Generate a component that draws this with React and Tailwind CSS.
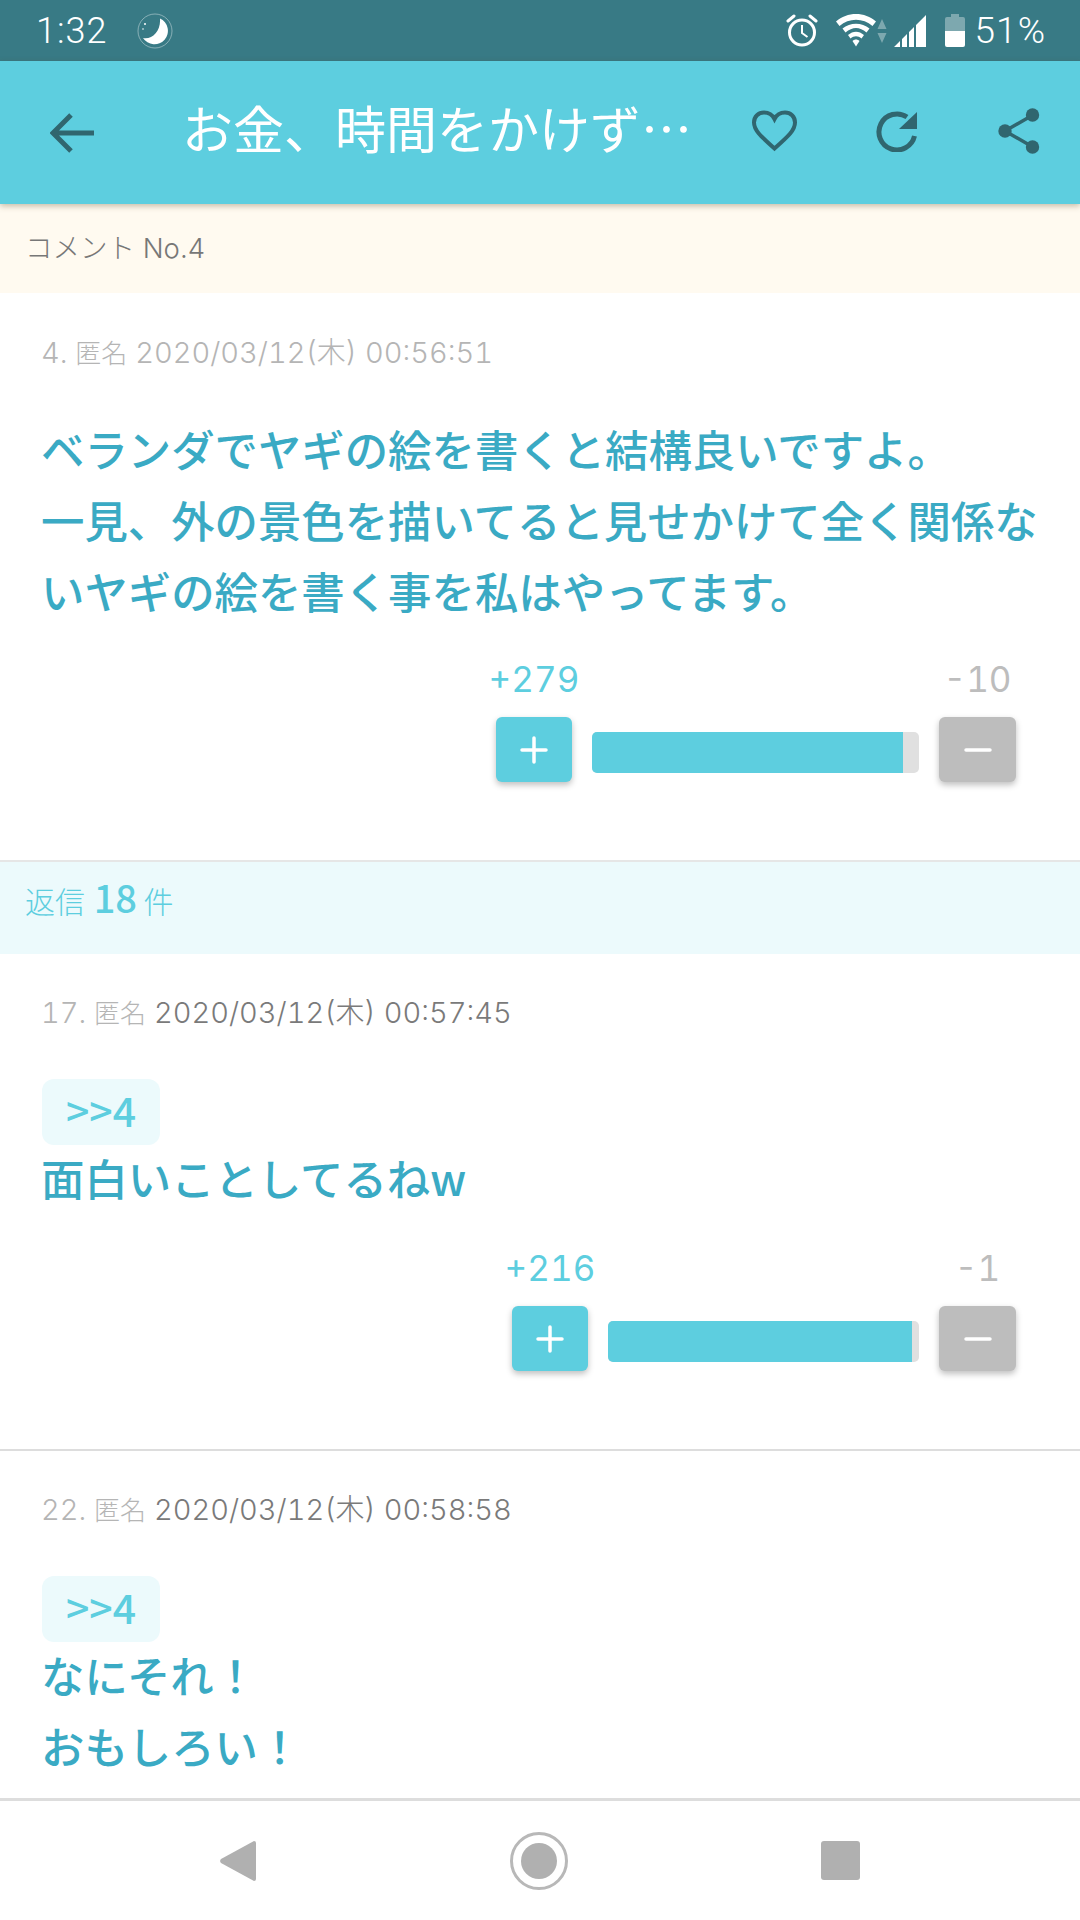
const jp = { fontFamily: '"Noto Sans CJK JP", sans-serif' };
const latin = { fontFamily: 'Inter, "Noto Sans CJK JP", sans-serif' };

const StatusIcons = () => (
  <div className="flex items-center">
    {/* alarm */}
    <svg width="32" height="33" viewBox="0 0 32 33" fill="none" className="mr-[18px]">
      <circle cx="16" cy="18.5" r="12.5" stroke="white" strokeWidth="3" />
      <path d="M16 11v8l5.5 4" stroke="white" strokeWidth="2" />
      <path d="M2 7l6-5M30 7l-6-5" stroke="white" strokeWidth="3" strokeLinecap="round" />
    </svg>
    {/* wifi */}
    <svg width="40" height="33" viewBox="0 0 40 33">
      <path d="M0 7.500C11-2.500 29-2.500 40 7.500L36.500 12C27 3.500 13 3.500 3.500 12Z" fill="white" />
      <path d="M6.500 14.500C14 8 26 8 33.500 14.500L30.500 18.500C23.500 12.500 16.500 12.500 9.500 18.500Z" fill="white" />
      <path d="M12 21C17 16.500 23 16.500 28 21L25.500 24.500C22 21.500 18 21.500 14.500 24.500Z" fill="white" />
      <path d="M16.500 27C18.500 25 21.500 25 23.500 27L20 32.500Z" fill="white" />
    </svg>
    <svg width="10" height="24" viewBox="0 0 10 24" className="ml-[1px] mr-[7px]">
      <path d="M5 0l4.500 10H.5Z M.5 14h9L5 24Z" fill="white" fillOpacity="0.35" />
    </svg>
    {/* signal */}
    <svg width="32" height="32" viewBox="0 0 32 32" className="mr-[19px]">
      <path d="M0 32l6-6v6Z M8 24l5-5v13H8Z M15 17l5-5v20h-5Z M22 10l10-10v32H22Z" fill="white" />
    </svg>
    {/* battery */}
    <svg width="20" height="33" viewBox="0 0 20 33" className="mr-[10px]">
      <path d="M6 0h8v3h4a2 2 0 0 1 2 2v12H0V5a2 2 0 0 1 2-2h4Z" fill="white" fillOpacity="0.35" />
      <path d="M0 17h20v14a2 2 0 0 1-2 2H2a2 2 0 0 1-2-2Z" fill="white" />
    </svg>
    <span className="text-[37px] leading-none tracking-[1px] text-white font-light" style={{ fontFamily: 'Roboto, sans-serif' }}>51%</span>
  </div>
);

const StatusBar = () => (
  <div className="h-[61px] shrink-0 bg-[#387a85] flex items-center justify-between pl-[36px] pr-[34px]">
    <div className="flex items-center">
      <span className="text-[36px] leading-none tracking-[1px] text-white font-light" style={{ fontFamily: 'Roboto, sans-serif' }}>1:32</span>
      <svg width="36" height="36" viewBox="0 0 36 36" className="ml-[30px]">
        <circle cx="18" cy="18" r="17" fill="none" stroke="white" strokeOpacity="0.4" strokeWidth="1" />
        <path d="M23 5.500A13.500 13.500 0 1 1 6 25C15 27 24 18 23 5.500Z" fill="white" />
        <circle cx="8" cy="11" r="1" fill="white" />
        <circle cx="6" cy="16" r="0.8" fill="white" />
      </svg>
    </div>
    <StatusIcons />
  </div>
);

const Header = () => (
  <div className="relative z-10 h-[143px] shrink-0 bg-[#5dcedf] flex items-center shadow-[0_2px_6px_rgba(90,70,30,0.35)]">
    <svg width="44" height="40" viewBox="0 0 44 40" className="ml-[50px]" fill="none">
      <path d="M21 2L3 20l18 18M3 20h41" stroke="#30666f" strokeWidth="5" />
    </svg>
    <div className="ml-[88px] w-[513px] -mt-[10px] text-[51px] leading-none whitespace-nowrap text-white font-normal" style={jp}>
      お金、時間をかけず…
    </div>
    <svg width="45" height="42" viewBox="0 0 45 42" fill="none" className="ml-[57px] -mt-[3px]">
      <path d="M22.500 38.500C8 25.500 2 20 2 12.500 2 6.500 6.500 2.500 12 2.500c4.500 0 8.500 2.500 10.500 6.500 2-4 6-6.500 10.500-6.500 5.500 0 10 4 10 10 0 7.500-6 13-20.500 26Z" stroke="#30666f" strokeWidth="4" />
    </svg>
    <svg width="42" height="41" viewBox="0 0 42 41" fill="none" className="ml-[79px] -mt-[3px]">
      <path d="M38.500 25A18 18 0 1 1 31 6" stroke="#30666f" strokeWidth="5" />
      <path d="M41 1v17H23Z" fill="#30666f" />
    </svg>
    <svg width="42" height="46" viewBox="0 0 42 46" className="ml-[80px] -mt-[3px]">
      <path d="M34 7.500L7 23l27 15.500" fill="none" stroke="#30666f" strokeWidth="3.500" />
      <circle cx="34.500" cy="7" r="6.700" fill="#30666f" />
      <circle cx="7" cy="23" r="6.700" fill="#30666f" />
      <circle cx="34.500" cy="39" r="6.700" fill="#30666f" />
    </svg>
  </div>
);

const Votes = ({ up, down, barWidth, fillWidth }) => (
  <div className="flex justify-end pr-[64px]">
    <div className="grid grid-cols-[76px_auto_77px] gap-x-[20px] gap-y-[18px]">
      <div className="pt-[1px] flex justify-center text-[35px] leading-[40px] tabular-nums text-[#5dcedf] whitespace-nowrap" style={latin}>{up}</div>
      <div />
      <div className="pt-[1px] flex justify-center text-[35px] leading-[40px] tabular-nums text-[#bdbdbd] whitespace-nowrap" style={latin}>{down}</div>
      <div className="h-[65px] rounded-[6px] bg-[#5dcedf] shadow-[0_3px_6px_rgba(0,0,0,0.25)] flex items-center justify-center">
        <svg width="28" height="28" viewBox="0 0 28 28">
          <path d="M14 2v24M2 14h24" stroke="white" strokeWidth="3.500" strokeLinecap="round" />
        </svg>
      </div>
      <div className="self-center mt-[5px] h-[41px] rounded-[5px] bg-[#e0e0e0] overflow-hidden" style={{ width: barWidth }}>
        <div className="h-full bg-[#5dcedf]" style={{ width: fillWidth }} />
      </div>
      <div className="h-[65px] rounded-[6px] bg-[#bdbdbd] shadow-[0_3px_6px_rgba(0,0,0,0.25)] flex items-center justify-center">
        <svg width="28" height="6" viewBox="0 0 28 6">
          <path d="M2 3h24" stroke="white" strokeWidth="3.500" strokeLinecap="round" />
        </svg>
      </div>
    </div>
  </div>
);

const Meta = ({ num, date, dim }) => (
  <div className={`pl-[41px] text-[29px] leading-[36px] font-light tabular-nums whitespace-nowrap ${dim ? 'text-[#b5b5b5]' : 'text-[#7a7a7a]'}`} style={latin}>
    <span className="text-[#b5b5b5]">{num} <span className="text-[26px] leading-none">匿名</span></span> {date}
  </div>
);

const Badge = () => (
  <div className="ml-[42px] w-[118px] h-[66px] pb-[4px] rounded-[12px] bg-[#ecfafc] flex items-center justify-center text-[41px] font-medium text-[#5dcedf]" style={jp}>
    &gt;&gt;4
  </div>
);

const Body = ({ lines }) => (
  <div className="-mt-[3px] pl-[41px] pr-[30px] text-[43.4px] leading-[71px] font-medium text-[#3aaac4]" style={jp}>
    {lines.map((l, i) => <div key={i} className="whitespace-nowrap">{l}</div>)}
  </div>
);

export default function App() {
  return (
    <div className="w-[1080px] h-[1920px] bg-white flex flex-col overflow-hidden">
      <StatusBar />
      <Header />
      <div className="flex-1 overflow-hidden">
        <div className="h-[89px] bg-[#fffaf0] pl-[25px] pt-[26px] text-[27.5px] leading-[36px] font-light text-[#777777]" style={latin}>
          コメント No.4
        </div>

        <div className="pt-[42px] pb-[78px] border-b-2 border-[#e6e6e6]">
          <Meta num="4." date="2020/03/12(木) 00:56:51" dim />
          <div className="mt-[45px] mb-[32px]">
            <Body lines={['ベランダでヤギの絵を書くと結構良いですよ。', '一見、外の景色を描いてると見せかけて全く関係な', 'いヤギの絵を書く事を私はやってます。']} />
          </div>
          <Votes up="+279" down="-10" barWidth={327} fillWidth={311} />
        </div>

        <div className="h-[92px] bg-[#ecfafc] pl-[25px] pt-[16px] text-[30px] leading-[36px] text-[#5dcedf] font-light" style={jp}>
          返信 <span className="ml-[2px] text-[38px] leading-none font-medium">18</span> 件
        </div>

        <div className="pt-[41px] pb-[78px] border-b-2 border-[#dddddd]">
          <Meta num="17." date="2020/03/12(木) 00:57:45" />
          <div className="mt-[48px]"><Badge /></div>
          <div className="mb-[34px]"><Body lines={['面白いことしてるねw']} /></div>
          <Votes up="+216" down="-1" barWidth={311} fillWidth={304} />
        </div>

        <div className="pt-[41px]">
          <Meta num="22." date="2020/03/12(木) 00:58:58" />
          <div className="mt-[48px]"><Badge /></div>
          <Body lines={['なにそれ！', 'おもしろい！']} />
        </div>
      </div>

      {/* nav bar */}
      <div className="h-[122px] shrink-0 bg-white border-t-[3px] border-[#dddddd] flex items-center relative">
        <svg width="36" height="42" viewBox="0 0 36 42" className="ml-[220px]">
          <path d="M34 1a2 2 0 0 1 2 2v36a2 2 0 0 1-2 2L1 23a3 3 0 0 1 0-4Z" fill="#b0b0b0" />
        </svg>
        <svg width="58" height="58" viewBox="0 0 58 58" className="ml-[254px]">
          <circle cx="29" cy="29" r="27.500" fill="none" stroke="#b8b8b8" strokeWidth="3" />
          <circle cx="29" cy="29" r="18" fill="#b0b0b0" />
        </svg>
        <div className="ml-[253px] w-[39px] h-[39px] rounded-[3px] bg-[#b0b0b0]" />
      </div>
    </div>
  );
}
